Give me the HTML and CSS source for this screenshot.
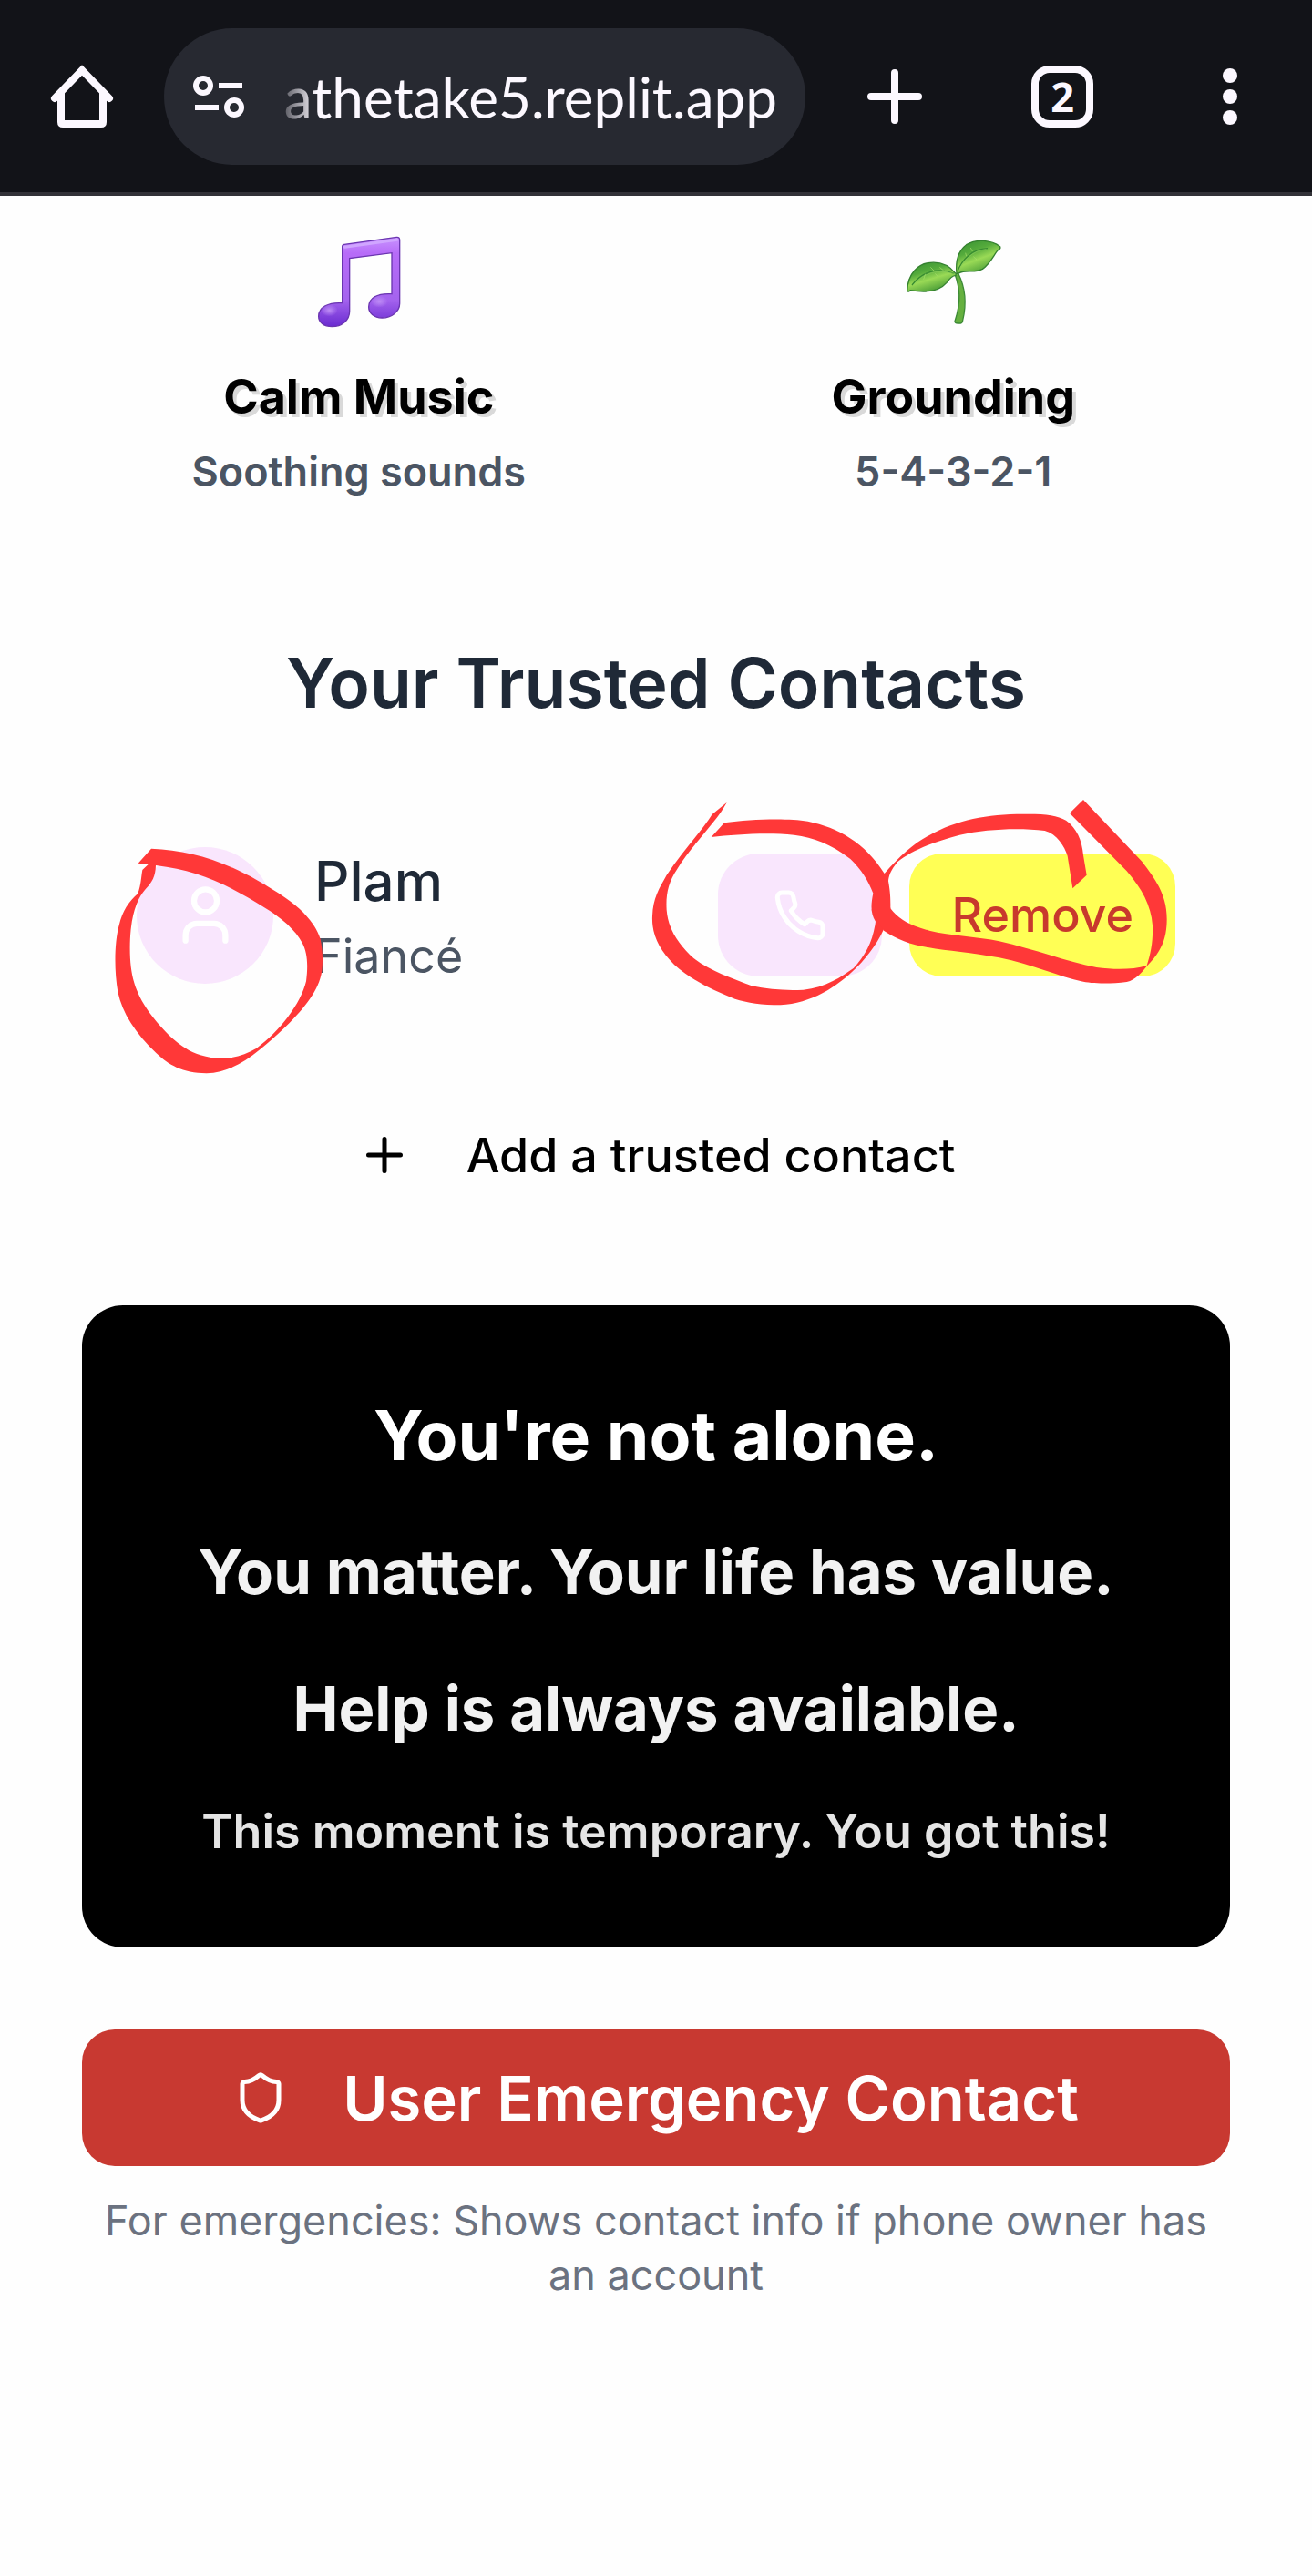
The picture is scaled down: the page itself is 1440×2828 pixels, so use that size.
FILE: index.html
```html
<!DOCTYPE html>
<html lang="en">
<head>
<meta charset="utf-8">
<meta name="viewport" content="width=device-width, initial-scale=1">
<title>Trusted Contacts</title>
<link rel="stylesheet" href="styles.css">
</head>
<body>
<header class="browser-bar">
  <button class="bar-button" type="button" aria-label="Home">
    <svg class="bar-icon" viewBox="0 0 72 72"><path d="M6 38 36 7 66 38M13 32V64Q13 66 15 66H57Q59 66 59 64V32" stroke-width="8"/></svg>
  </button>
  <div class="address">
    <svg class="site-icon" viewBox="0 0 56 40"><g stroke-width="6"><circle cx="10" cy="8" r="8"/><path d="M27 8H53M1 32H27"/><circle cx="44" cy="32" r="8"/></g></svg>
    <input class="address-input" type="text" aria-label="Address" value="athetake5.replit.app">
  </div>
  <nav class="bar-actions">
    <button class="bar-button" type="button" aria-label="New tab">
      <svg class="bar-icon" viewBox="0 0 72 72"><path d="M36 10V62M10 36H62" stroke-width="8"/></svg>
    </button>
    <button class="bar-button tab-count" type="button" aria-label="Open tabs">2</button>
    <button class="bar-button" type="button" aria-label="Menu">
      <svg class="bar-icon dots" viewBox="0 0 72 72"><circle cx="36" cy="13" r="8"/><circle cx="36" cy="36" r="8"/><circle cx="36" cy="59" r="8"/></svg>
    </button>
  </nav>
</header>

<main class="page">
  <section class="tiles">
    <a class="tile" href="#music">
      <svg class="tile-icon" viewBox="476 30 330 360" aria-hidden="true">
        <defs>
          <linearGradient id="note" x1="0" y1="0" x2="0" y2="1"><stop offset="0" stop-color="#c995ff"/><stop offset=".18" stop-color="#b76cf8"/><stop offset=".7" stop-color="#a463ee"/><stop offset="1" stop-color="#6a2bd0"/></linearGradient>
          <radialGradient id="shine"><stop offset="0" stop-color="#bd8cf5"/><stop offset="1" stop-color="#bd8cf5" stop-opacity="0"/></radialGradient>
        </defs>
        <path d="M586 92Q586 86 593 85L765 61Q775 60 775 70V280C775 306 748 327 717 327C690 327 673 311 673 291C673 262 700 245 749 248V113L610 131V305C610 335 584 356 552 356C525 356 508 342 508 322C508 292 540 275 586 278Z" fill="url(#note)" stroke="#6a35b0" stroke-width="4"/>
        <ellipse cx="543" cy="302" rx="28" ry="20" fill="url(#shine)"/><ellipse cx="708" cy="273" rx="28" ry="20" fill="url(#shine)"/>
        <path d="M594 94 766 70" stroke="#d0a6ff" stroke-width="9" stroke-linecap="round"/>
      </svg>
      <span class="tile-title">Calm Music</span>
      <span class="tile-note">Soothing sounds</span>
    </a>
    <a class="tile" href="#grounding">
      <svg class="tile-icon" viewBox="334 30 330 360" aria-hidden="true">
        <defs>
          <linearGradient id="leaf" x1="0" y1="0" x2=".5" y2="1"><stop offset="0" stop-color="#348f32"/><stop offset=".4" stop-color="#55ab3c"/><stop offset=".65" stop-color="#9ada56"/><stop offset="1" stop-color="#4d9f38"/></linearGradient>
        </defs>
        <path d="M505 182C520 225 528 270 505 338Q505 345 515 345H524Q530 344 531 335C543 285 541 230 516 180Z" fill="#65b03f" stroke="#3c8a35" stroke-width="4"/>
        <path d="M508 181C485 152 455 142 424 145C385 148 350 180 348 238Q352 243 359 236C400 243 450 244 478 211C487 198 496 188 508 187Z" fill="url(#leaf)" stroke="#34812f" stroke-width="4"/>
        <path d="M511 181C507 145 514 108 543 86C575 66 625 70 654 92Q657 99 648 103C635 115 623 148 596 166C570 181 540 166 518 180Z" fill="url(#leaf)" stroke="#34812f" stroke-width="4"/>
        <path d="M503 181C450 158 397 175 364 219M514 174C527 137 560 100 613 98" fill="none" stroke="#378b31" stroke-width="4"/>
        <path d="M507 183C450 164 403 179 368 219M517 174C532 139 563 105 608 101" fill="none" stroke="#86ca5b" stroke-width="2"/>
        <path d="M425 160 436 171M455 160 468 171M408 182 402 200M440 181 450 192M540 113 543 124M557 96 563 108M566 125 577 135" stroke="#a8df6c" stroke-width="2"/>
      </svg>
      <span class="tile-title">Grounding</span>
      <span class="tile-note">5-4-3-2-1</span>
    </a>
  </section>

  <section class="contacts">
    <h2 class="contacts-title">Your Trusted Contacts</h2>
    <div class="contact">
      <div class="avatar">
        <svg class="icon icon-person" viewBox="0 0 24 24"><path d="M19 21v-2a4 4 0 0 0-4-4H9a4 4 0 0 0-4 4v2"/><circle cx="12" cy="7" r="4"/></svg>
        <svg class="marker marker-left" viewBox="0 0 1380 960" aria-hidden="true">
          <path d="M198 158C345 165 470 205 640 320C705 365 740 410 755 456C762 490 764 520 760 560C750 625 705 680 640 745C560 820 480 895 380 898C300 897 255 870 215 832C145 765 103 700 88 630C76 560 76 470 92 410C103 362 125 332 154 306C165 275 164 255 169 228L188 210 155 206ZM213 213C212 250 200 270 180 290C148 325 130 385 128 470C126 570 142 625 190 695C235 755 290 815 360 838C430 860 490 847 545 815C620 760 690 670 708 595C715 540 712 500 695 468C670 420 615 380 580 358C440 270 350 230 213 213Z" fill-rule="evenodd"/>
        </svg>
      </div>
      <div class="contact-text">
        <span class="contact-name">Plam</span>
        <span class="contact-relation">Fiancé</span>
      </div>
      <div class="contact-actions">
        <button class="action action-call" type="button" aria-label="Call Plam">
          <svg class="icon" viewBox="0 0 24 24"><path d="M22 16.92v3a2 2 0 0 1-2.18 2 19.79 19.79 0 0 1-8.63-3.07 19.5 19.5 0 0 1-6-6 19.79 19.79 0 0 1-3.07-8.67A2 2 0 0 1 4.11 2h3a2 2 0 0 1 2 1.72 12.84 12.84 0 0 0 .7 2.81 2 2 0 0 1-.45 2.11L8.09 9.91a16 16 0 0 0 6 6l1.27-1.27a2 2 0 0 1 2.11-.45 12.84 12.84 0 0 0 2.81.7A2 2 0 0 1 22 16.92z"/></svg>
        </button>
        <button class="action action-remove" type="button">Remove</button>
        <svg class="marker marker-right" viewBox="0 0 1890 780" aria-hidden="true">
          <path d="M272 180 315 133C400 121 520 117 590 128C690 148 780 200 842 300L862 415C850 480 810 550 750 610C685 675 600 728 500 733C440 733 390 726 350 713C280 685 205 650 150 600C100 550 75 500 78 440C80 380 100 350 125 305C175 230 240 160 275 105L323 66C290 130 200 215 160 285C130 330 122 370 125 420C130 480 160 530 215 580C270 622 340 645 405 670C460 682 520 686 575 683C650 675 700 640 740 612C780 570 805 520 813 458C795 430 798 400 805 365C790 325 765 285 730 252C665 202 610 182 545 173C450 164 350 172 272 180Z"/>
          <path d="M842 300C895 240 940 200 990 174C1080 123 1180 104 1300 104C1370 103 1410 108 1440 125C1475 150 1493 190 1497 240L1508 305 1462 349 1445 242C1435 210 1410 170 1370 159C1290 149 1180 152 1090 173C1005 195 930 225 885 262C862 290 856 310 855 325C863 370 862 395 862 415C890 455 940 475 990 488C1060 505 1150 507 1220 523C1340 550 1440 590 1540 609C1600 617 1660 617 1706 603C1720 560 1727 520 1725 470C1720 405 1690 350 1640 292L1452 101 1497 57 1690 260C1745 330 1772 380 1772 450C1772 520 1750 560 1706 605C1690 625 1670 650 1640 657C1580 665 1520 662 1490 655C1420 640 1330 600 1220 577C1130 560 1050 555 985 543C930 535 880 515 840 488L800 420Z"/>
        </svg>
      </div>
    </div>
    <button class="add-contact" type="button">
      <svg class="icon" viewBox="0 0 24 24"><path d="M5 12h14M12 5v14"/></svg>
      Add a trusted contact
    </button>
  </section>

  <section class="support">
    <p class="support-lead">You're not alone.</p>
    <p class="support-line">You matter. Your life has value.</p>
    <p class="support-line">Help is always available.</p>
    <p class="support-note">This moment is temporary. You got this!</p>
  </section>

  <section class="emergency">
    <button class="emergency-button" type="button">
      <svg class="icon" viewBox="0 0 24 24"><path d="M20 13c0 5-3.5 7.5-7.66 8.95a1 1 0 0 1-.67-.01C7.5 20.5 4 18 4 13V6a1 1 0 0 1 1-1c2 0 4.5-1.2 6.24-2.72a1.17 1.17 0 0 1 1.52 0C14.51 3.81 17 5 19 5a1 1 0 0 1 1 1z"/></svg>
      User Emergency Contact
    </button>
    <p class="emergency-note">For emergencies: Shows contact info if phone owner has an account</p>
  </section>
</main>
</body>
</html>
```
FILE: styles.css
```css
* {
  box-sizing: border-box;
}

body {
  margin: 0;
  background: #fefefe;
  color: #000;
  font-family: Inter, "Liberation Sans", sans-serif;
}

button {
  border: 0;
  padding: 0;
  background: none;
  color: inherit;
  font: inherit;
  cursor: pointer;
}

p,
h2 {
  margin: 0;
}

/* Browser bar */
.browser-bar {
  display: flex;
  align-items: center;
  padding: 31px 54px 30px;
  border-bottom: 4px solid #323238;
  background: #121318;
}

.bar-button {
  flex: none;
  width: 72px;
  height: 72px;
}

.bar-icon {
  display: block;
  fill: none;
  stroke: #fcf8ff;
  stroke-linecap: round;
}

.dots {
  fill: #fcf8ff;
  stroke: none;
}

.address {
  flex: 1;
  min-width: 0;
  display: flex;
  align-items: center;
  gap: 31px;
  height: 150px;
  margin: 0 62px 0 54px;
  padding: 0 31px 0 33px;
  border-radius: 75px;
  background: #272931;
}

.site-icon {
  flex: none;
  width: 56px;
  height: 40px;
  overflow: visible;
  fill: none;
  stroke: #fcf8ff;
}

.address-input {
  flex: 1;
  min-width: 0;
  height: 90px;
  padding: 0;
  border: 0;
  background: none;
  color: #fcf8ff;
  font: 62px Lato, sans-serif;
  text-align: right;
  mask-image: linear-gradient(to right, transparent, #000 48px);
}

.bar-actions {
  display: flex;
  gap: 112px;
}

.tab-count {
  border: 8px solid #fcf8ff;
  border-radius: 20px;
  width: 68px;
  height: 68px;
  margin: 2px;
  color: #fcf8ff;
  font: 700 45px/52px "Open Sans", sans-serif;
}

/* Page */
.page {
  padding: 35px 90px 90px;
}

.icon {
  flex: none;
  width: 60px;
  height: 60px;
  fill: none;
  stroke: currentColor;
  stroke-width: 2;
  stroke-linecap: round;
  stroke-linejoin: round;
}

.tiles {
  display: grid;
  grid-template-columns: 1fr 1fr;
  gap: 45px;
}

.tile {
  display: flex;
  flex-direction: column;
  align-items: center;
  color: inherit;
  text-decoration: none;
}

.tile-icon {
  width: 110px;
  height: 120px;
  margin-bottom: 28px;
}

.tile-title {
  margin-bottom: 15px;
  font-size: 52px;
  font-weight: 700;
  line-height: 75px;
  text-shadow: 4px 4px 0 #d9d9d9;
}

.tile-note {
  color: #4b5563;
  font-size: 45px;
  font-weight: 600;
  line-height: 60px;
}

/* Trusted contacts */
.contacts {
  display: flex;
  flex-direction: column;
  padding-top: 149px;
}

.contacts-title {
  margin-bottom: 120px;
  color: #1f2937;
  font-size: 75px;
  font-weight: 600;
  line-height: 105px;
  text-align: center;
}

.contact {
  display: flex;
  align-items: center;
  padding: 0 60px;
}

.avatar {
  position: relative;
  display: grid;
  place-items: center;
  width: 150px;
  height: 150px;
  margin-right: 45px;
  border-radius: 50%;
  background: #f9e6fd;
  color: #fff;
}

.icon-person {
  width: 75px;
  height: 75px;
}

.contact-text {
  display: flex;
  flex: 1;
  flex-direction: column;
}

.contact-name {
  color: #1f2937;
  font-size: 60px;
  font-weight: 500;
  line-height: 90px;
}

.contact-relation {
  color: #4b5563;
  font-size: 52px;
  line-height: 75px;
}

.contact-actions {
  position: relative;
  display: flex;
  gap: 30px;
}

.action {
  display: flex;
  align-items: center;
  height: 135px;
  border-radius: 45px;
}

.action-call {
  padding: 0 60px;
  background: #f9e6fd;
  color: #fff;
}

.action-remove {
  padding: 0 46px;
  border-radius: 36px;
  background: #ffff55;
  color: #c8392d;
  font-size: 52px;
  font-weight: 500;
}

/* Hand-drawn marker strokes laid over the row */
.marker {
  position: absolute;
  z-index: 1;
  fill: #ff3838;
  pointer-events: none;
}

.marker-left {
  top: -51px;
  left: -50px;
  width: 460px;
  height: 320px;
}

.marker-right {
  top: -78px;
  right: -30px;
  width: 630px;
  height: 260px;
}

.add-contact {
  display: flex;
  align-items: center;
  align-self: center;
  gap: 60px;
  height: 120px;
  margin: 121px 0 105px;
  font-size: 52px;
  font-weight: 500;
}

/* Support card */
.support {
  display: grid;
  gap: 45px;
  padding: 90px 60px;
  border-radius: 45px;
  background: #000;
  text-align: center;
}

.support-lead {
  color: #fff;
  font-size: 75px;
  font-weight: 700;
  line-height: 105px;
}

.support-line {
  color: #f2f2f2;
  font-size: 67px;
  font-weight: 700;
  line-height: 105px;
}

.support-note {
  color: #e5e5e5;
  font-size: 52px;
  font-weight: 600;
  line-height: 75px;
}

/* Emergency */
.emergency {
  padding-top: 90px;
}

.emergency-button {
  display: flex;
  align-items: center;
  justify-content: center;
  gap: 60px;
  width: 100%;
  height: 150px;
  border-radius: 36px;
  background: #c83931;
  color: #fff;
  font-size: 67px;
  font-weight: 600;
}

.emergency-note {
  margin-top: 30px;
  color: #6b7280;
  font-size: 45px;
  line-height: 60px;
  text-align: center;
}
```
